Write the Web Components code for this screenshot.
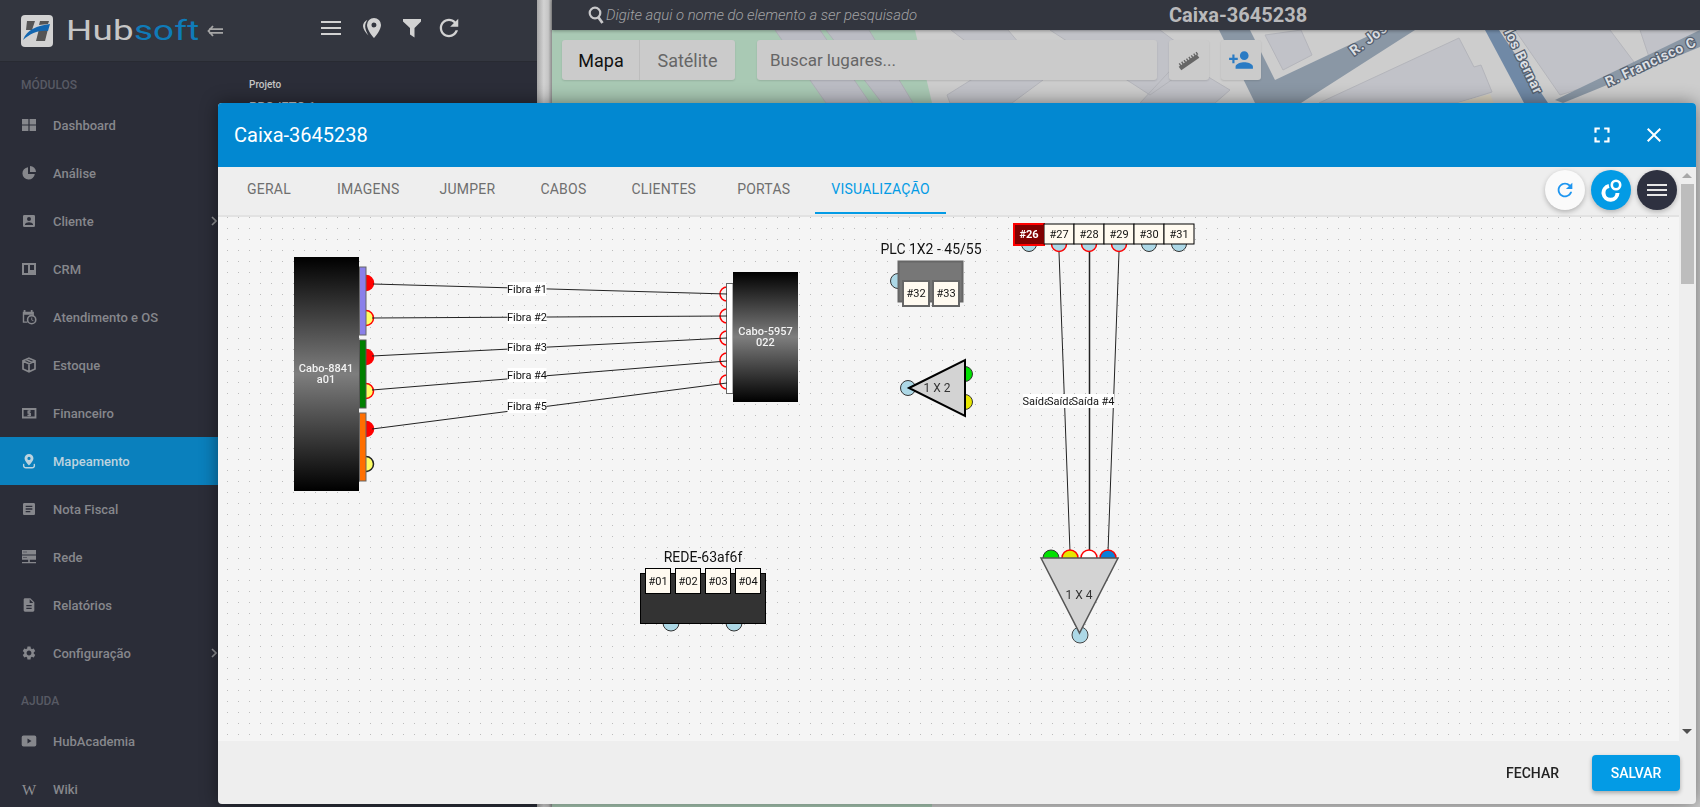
<!DOCTYPE html>
<html lang="pt-BR">
<head>
<meta charset="utf-8">
<title>Hubsoft - Mapeamento</title>
<style>
    html, body { margin: 0; height: 100%; overflow: hidden; background: #2b2d38; font-family: Roboto, "Liberation Sans", sans-serif; }
</style>
</head>
<body>
<hub-app>
    <hub-sidebar>
        <hub-nav-label>MÓDULOS</hub-nav-label>
        <hub-nav-item><svg slot="icon" width="16" height="16" viewBox="0 0 16 16"><path d="M1 2h6.400v5.600H1zM8.600 2H15v5.600H8.600zM1 8.600h6.400V14H1zM8.600 8.600H15V14H8.600z"/></svg>Dashboard</hub-nav-item>
        <hub-nav-item><svg slot="icon" width="16" height="16" viewBox="0 0 16 16"><path d="M7 2.200A6.200 6.200 0 1 0 13.800 9H7zM9 1v6h6a6 6 0 0 0-6-6z"/></svg>Análise</hub-nav-item>
        <hub-nav-item chevron><svg slot="icon" width="18" height="18" viewBox="0 0 24 24"><path d="M3 5v14a2 2 0 0 0 2 2h14a2 2 0 0 0 2-2V5a2 2 0 0 0-2-2H5a2 2 0 0 0-2 2zm12 4a3 3 0 1 1-6 0 3 3 0 0 1 6 0zm-9 8c0-2 4-3.100 6-3.100s6 1.100 6 3.100v1H6v-1z"/></svg>Cliente</hub-nav-item>
        <hub-nav-item><svg slot="icon" width="16" height="16" viewBox="0 0 16 16"><path fill-rule="evenodd" d="M1 2h14v12H1zM3 4v8h4V4zm6 0v5h4V4z"/></svg>CRM</hub-nav-item>
        <hub-nav-item><svg slot="icon" width="18" height="18" viewBox="0 0 18 18"><path d="M3 1h2v2h6V1h2v2h1.500V8h-1.600V6.400H3.600V14h3.600v1.600H2V3h1z"/><circle cx="12" cy="12" r="4.600" fill="none" stroke="currentColor" stroke-width="1.800"/><path d="M11.600 9.600h1V12l1.600 1-.5.8-2.100-1.300z"/></svg>Atendimento e OS</hub-nav-item>
        <hub-nav-item><svg slot="icon" width="16" height="16" viewBox="0 0 16 16"><path fill="none" stroke="currentColor" stroke-width="1.700" d="M8 1.200l6 2.600v8.200l-6 2.800-6-2.800V3.800zM2 4l6 2.800L14 4M8 6.800V14.600M5 2.600l6 2.800"/></svg>Estoque</hub-nav-item>
        <hub-nav-item><svg slot="icon" width="16" height="16" viewBox="0 0 16 16"><path fill-rule="evenodd" d="M1 3h14.400v10.500H1zM2.600 5v6.400h11V5z"/><path fill="none" stroke="currentColor" stroke-width="1.100" d="M10 6H7v2.200h2.400v2.200H6.400M8.200 5v6.400"/></svg>Financeiro</hub-nav-item>
        <hub-nav-item active><svg slot="icon" width="18" height="18" viewBox="0 0 18 18"><path fill-rule="evenodd" d="M9 1a5 5 0 0 1 5 5c0 3.400-5 8-5 8S4 9.400 4 6a5 5 0 0 1 5-5zm0 3.300A1.800 1.800 0 1 0 9 7.900 1.800 1.800 0 0 0 9 4.300z"/><path fill="none" stroke="currentColor" stroke-width="1.600" stroke-linecap="round" d="M3 13c-.5 2.500 1 3.600 2.500 3.600h7c1.500 0 3-1.100 2.500-3.600"/></svg>Mapeamento</hub-nav-item>
        <hub-nav-item><svg slot="icon" width="18" height="18" viewBox="0 0 24 24"><path d="M19 3H5c-1.100 0-2 .9-2 2v14c0 1.100.9 2 2 2h14c1.100 0 2-.9 2-2V5c0-1.100-.9-2-2-2zm-5 14H7v-2h7v2zm3-4H7v-2h10v2zm0-4H7V7h10v2z"/></svg>Nota Fiscal</hub-nav-item>
        <hub-nav-item><svg slot="icon" width="16" height="16" viewBox="0 0 16 16"><path fill-rule="evenodd" d="M1 1h14v4.400H1zM2.500 2.500v1h1v-1zm2 0v1h1v-1zM1 6.400h14v4.400H1zM2.500 8v1h1V8zm2 0v1h1V8zM7.200 10.800h1.600v2.200H15v1.200H1V13h6.200z"/></svg>Rede</hub-nav-item>
        <hub-nav-item><svg slot="icon" width="18" height="18" viewBox="0 0 24 24"><path d="M14 2H6c-1.100 0-1.990.9-1.990 2L4 20c0 1.100.89 2 1.990 2H18c1.100 0 2-.9 2-2V8l-6-6zm2 16H8v-2h8v2zm0-4H8v-2h8v2zm-3-5V3.500L18.500 9H13z"/></svg>Relatórios</hub-nav-item>
        <hub-nav-item chevron><svg slot="icon" width="18" height="18" viewBox="0 0 24 24"><path d="M19.140 12.940c.04-.3.06-.61.06-.94 0-.32-.02-.64-.07-.94l2.030-1.580a.49.49 0 0 0 .12-.61l-1.920-3.320a.488.488 0 0 0-.59-.22l-2.390.96c-.5-.38-1.030-.7-1.620-.94l-.36-2.540a.484.484 0 0 0-.48-.41h-3.840c-.24 0-.43.17-.47.41l-.36 2.540c-.59.24-1.130.57-1.620.94l-2.390-.96c-.22-.08-.47 0-.59.22L2.740 8.870c-.12.21-.08.47.12.61l2.030 1.580c-.05.3-.09.63-.09.94s.02.64.07.94l-2.030 1.580a.49.49 0 0 0-.12.61l1.920 3.320c.12.22.37.29.59.22l2.390-.96c.5.38 1.030.7 1.620.94l.36 2.540c.05.24.24.41.48.41h3.840c.24 0 .44-.17.47-.41l.36-2.540c.59-.24 1.130-.56 1.620-.94l2.390.96c.22.08.47 0 .59-.22l1.920-3.320c.12-.22.07-.47-.12-.61l-2.010-1.580zM12 15.600c-1.980 0-3.600-1.620-3.600-3.600s1.620-3.600 3.600-3.600 3.600 1.620 3.600 3.600-1.620 3.600-3.600 3.600z"/></svg>Configuração</hub-nav-item>
        <hub-nav-label second>AJUDA</hub-nav-label>
        <hub-nav-item><svg slot="icon" width="16" height="16" viewBox="0 0 16 16"><path fill-rule="evenodd" d="M2.500 2.500h11A1.800 1.800 0 0 1 15.300 4.300v7.400a1.800 1.800 0 0 1-1.800 1.800h-11A1.800 1.800 0 0 1 .7 11.700V4.300a1.800 1.800 0 0 1 1.800-1.800zM6.500 5.500v5L10.500 8z"/></svg>HubAcademia</hub-nav-item>
        <hub-nav-item><span slot="icon" style="font: 400 15px 'Liberation Serif', serif; color: #8f9094; display: block; width: 16px; padding-top: 2px; text-align: center;">W</span>Wiki</hub-nav-item>
    </hub-sidebar>
    <hub-panel></hub-panel>
    <hub-gutter></hub-gutter>
    <hub-map></hub-map>
</hub-app>
<hub-modal title-text="Caixa-3645238">
    <hub-tabs></hub-tabs>
    <hub-diagram></hub-diagram>
    <hub-button slot="footer">FECHAR</hub-button>
    <hub-button slot="footer" primary>SALVAR</hub-button>
</hub-modal>

<script>
class HubApp extends HTMLElement {
    connectedCallback() {
        this.attachShadow({ mode: 'open' });
        this.shadowRoot.innerHTML = `
            <style>
                :host { display: flex; width: 100vw; height: 100vh; overflow: hidden; }
            </style>
            <slot></slot>
        `;
    }
}

class HubSidebar extends HTMLElement {
    connectedCallback() {
        this.attachShadow({ mode: 'open' });
        this.shadowRoot.innerHTML = `
            <style>
                :host { display: flex; flex-direction: column; flex: 0 0 238px; background: #2b2d38; color: #8f9094; overflow: hidden; }
                .brand { display: flex; align-items: center; flex: 0 0 62px; box-sizing: border-box; padding-left: 21px; background: #33363f; border-bottom: 1px solid #282a32; }
                .word { flex: 0 0 141px; margin-left: 13px; height: 32px; line-height: 32px; white-space: nowrap; }
                .word span { display: inline-block; transform: scaleX(1.36); transform-origin: left center; font-size: 27px; font-weight: 400; letter-spacing: .2px; color: #c6c6c6; }
                .word b { font-weight: 400; color: #0f7bb8; }
            </style>
            <div class="brand">
                <svg width="32" height="32" viewBox="0 0 32 32">
                    <rect width="32" height="32" rx="4" fill="#d2d2d2"/>
                    <path d="M6 6h8l-3 9H5zM18 14h9l-3 12h-9z" fill="#555"/>
                    <path d="M19 6h9l-1 3-9 1z" fill="#555"/>
                    <path d="M2 25C6 14 16 11 29 9l-2 7C18 15 10 18 2 25z" fill="#1266b0"/>
                </svg>
                <div class="word"><span>Hub<b>soft</b></span></div>
                <svg width="16" height="12" viewBox="0 0 16 12" fill="none" stroke="#a6a6a6" stroke-width="1.800"><path d="M6 1L1.500 6 6 11M2 4.200H16M2 7.800H16"/></svg>
            </div>
            <slot></slot>
        `;
    }
}

class HubNavLabel extends HTMLElement {
    connectedCallback() {
        this.attachShadow({ mode: 'open' });
        this.shadowRoot.innerHTML = `
            <style>
                :host { display: block; flex: 0 0 auto; box-sizing: border-box; height: 39px; padding: 15px 0 0 21px; font-size: 12px; line-height: 16px; font-weight: 500; color: #585a64; }
                :host([second]) { height: 40px; padding-top: 16px; }
            </style>
            <slot></slot>
        `;
    }
}

class HubNavItem extends HTMLElement {
    connectedCallback() {
        this.attachShadow({ mode: 'open' });
        this.shadowRoot.innerHTML = `
            <style>
                :host { display: flex; align-items: center; flex: 0 0 48px; height: 48px; box-sizing: border-box; padding: 0 21px 0 21px; font-size: 13px; font-weight: 500; color: #86878c; fill: currentColor; }
                :host([active]) { background: #0a80bd; color: #bcd3df; }
                .icon { display: flex; align-items: center; justify-content: center; flex: 0 0 16px; width: 16px; margin-right: 16px; }
                .text { flex: 1; white-space: nowrap; }
                .chev { display: none; width: 6px; height: 10px; fill: none; stroke: #8f9094; stroke-width: 1.600; }
                :host([chevron]) .chev { display: block; }
            </style>
            <span class="icon"><slot name="icon"></slot></span>
            <span class="text"><slot></slot></span>
            <svg class="chev" viewBox="0 0 6 10"><path d="M1 1l4 4-4 4"/></svg>
        `;
    }
}

class HubPanel extends HTMLElement {
    connectedCallback() {
        this.attachShadow({ mode: 'open' });
        this.shadowRoot.innerHTML = `
            <style>
                :host { display: flex; flex-direction: column; flex: 0 0 299px; background: #2b2d38; color: #d0d0d0; overflow: hidden; }
                .bar { display: flex; align-items: center; flex: 0 0 62px; box-sizing: border-box; padding: 0 0 6px 83px; gap: 22px; background: #33363f; border-bottom: 1px solid #282a32; }
                .bar svg { display: block; fill: #d2d2d2; }
                .bar svg:last-child { margin-left: -5px; }
                .field { padding: 16px 11px 0; font-size: 10px; font-weight: 500; line-height: 14px; color: #c6c6c6; }
                .value { margin-top: 6px; font-size: 13px; line-height: 18px; font-weight: 400; }
            </style>
            <div class="bar">
                <svg width="20" height="16" viewBox="0 0 20 16"><path d="M0 1h20v2H0zM0 7h20v2H0zM0 13h20v2H0z"/></svg>
                <svg width="18" height="20" viewBox="0 0 18 20"><path fill-rule="evenodd" d="M11 0a7 7 0 0 1 7 7c0 4.500-5.500 11.500-7 13-1.500-1.500-7-8.500-7-13a7 7 0 0 1 7-7zm0 4.500a2.500 2.500 0 1 0 0 5 2.500 2.500 0 0 0 0-5z"/><path d="M4.500 1.800C1.500 3.500 0 5.500 0 8c0 3 2.500 6.500 5.500 9.500C3.500 14 1.800 10.500 2.200 7.500c.3-2.200 1.200-4 2.300-5.700z"/></svg>
                <svg width="18" height="20" viewBox="0 0 18 20"><path d="M0 1h18v2.500L11.500 10v9.500L7 16.500V10L0 3.500z"/></svg>
                <svg width="22" height="22" viewBox="2.500 2.500 19 19"><path d="M17.650 6.350C16.200 4.900 14.210 4 12 4c-4.420 0-7.990 3.580-7.990 8s3.570 8 7.990 8c3.730 0 6.840-2.550 7.730-6h-2.080c-.82 2.330-3.040 4-5.650 4-3.310 0-6-2.690-6-6s2.690-6 6-6c1.660 0 3.140.69 4.220 1.780L13 11h7V4l-2.350 2.350z"/></svg>
            </div>
            <div class="field">Projeto<div class="value">PROJETO 1</div></div>
        `;
    }
}

class HubGutter extends HTMLElement {
    connectedCallback() {
        this.attachShadow({ mode: 'open' });
        this.shadowRoot.innerHTML = `
            <style>
                :host { display: block; flex: 0 0 15px; background: linear-gradient(to right, #a6a6a6, #d2d2d2 45%, #c6c6c6 75%, #8c8c8c); }
            </style>
        `;
    }
}

class HubMap extends HTMLElement {
    connectedCallback() {
        this.attachShadow({ mode: 'open' });
        this.shadowRoot.innerHTML = `
            <style>
                :host { display: flex; flex-direction: column; flex: 1; min-width: 0; }
                .top { display: flex; align-items: center; flex: 0 0 30px; padding-left: 36px; background: #33363f; position: relative; z-index: 2; box-shadow: 0 1px 3px rgba(0,0,0,.3); }
                .search { display: flex; align-items: center; gap: 2px; flex: 0 0 581px; }
                .search span { font-size: 14.85px; font-style: italic; font-weight: 300; color: #a2a2a4; }
                .name { font-size: 20px; font-weight: 700; color: #b9b9bb; }
                .canvas { position: relative; flex: 1; background: #cdcdcd; overflow: hidden; }
                .canvas > svg { position: absolute; left: 0; top: 0; width: 1148px; height: 777px; }
                .label { font: 700 14px Roboto, "Liberation Sans", sans-serif; letter-spacing: .6px; fill: #dcdfe3; stroke: #55606e; stroke-width: 2.500px; paint-order: stroke; }
                .controls { position: relative; display: flex; padding: 10px; }
                .box { display: flex; align-items: center; height: 40px; box-sizing: border-box; background: #cbcbcb; border-radius: 3px; font-size: 17px; color: #666; box-shadow: 0 1px 2px rgba(0,0,0,.12); }
                .types { width: 173px; margin-right: 22px; overflow: hidden; font-size: 18px; }
                .types div { display: flex; align-items: center; justify-content: center; height: 100%; }
                .types .on { flex: 0 0 78px; padding-left: 1px; color: #111; border-right: 1px solid #bdbdbd; box-sizing: border-box; }
                .types .off { flex: 1; }
                .places { width: 400px; padding-left: 13px; margin-right: 12px; }
                .tool { width: 40px; justify-content: center; margin-right: 12px; }
            </style>
            <div class="top">
                <div class="search">
                    <svg width="16" height="18" viewBox="0 0 16 18" fill="none" stroke="#c8c8ca" stroke-width="2.200"><circle cx="7" cy="7" r="5.300"/><path d="M10.500 11.500L14.500 17" stroke-width="2.800"/></svg>
                    <span>Digite aqui o nome do elemento a ser pesquisado</span>
                </div>
                <div class="name">Caixa-3645238</div>
            </div>
            <div class="canvas">
                <svg viewBox="552 30 1148 777">
                    <path d="M552 30H915L932 103V807H552z" fill="#a9c9b4"/>
                    <g fill="#bbbcc4" stroke="#aeafb6">
                        <path d="M775 30H820L870 103H826zM826 30H869L913 103H882z"/>
                    </g>
                    <g fill="#c1c2c8" stroke="#b4b5bb">
                        <path d="M947 95L1003 60 1043 80 1012 103H950zM951 30H1008L1025 50 990 60z"/>
                        <path d="M1140 103L1180 60 1230 90 1215 103zM1050 30H1160L1200 60 1150 95z"/>
                        <path d="M1265 35L1301 30 1312 55 1283 70z"/>
                        <path d="M1319 103L1459 38 1474 67 1481 65 1492 92 1457 103z"/>
                        <path d="M1515 30H1610L1640 70 1560 95z"/>
                        <path d="M1640 30H1700V40L1650 60z"/>
                    </g>
                    <path d="M1457 103L1490 94 1494 103z" fill="#d6cfbd"/>
                    <path d="M1219 30H1250L1275 80 1381 30H1415L1301 103H1255z" fill="#8a97a5"/>
                    <path d="M1555 100L1700 30V47L1563 103z" fill="#8a97a5"/>
                    <path d="M1485 30H1499L1548 103H1524z" fill="#7089a6"/>
                    <text class="label" transform="translate(1354 56) rotate(-37)">R. José</text>
                    <text class="label" transform="translate(1504 32) rotate(64)">los Bernar</text>
                    <text class="label" transform="translate(1608 87) rotate(-25)">R. Francisco C</text>
                </svg>
                <div class="controls">
                    <div class="box types"><div class="on">Mapa</div><div class="off">Satélite</div></div>
                    <div class="box places">Buscar lugares...</div>
                    <div class="box tool">
                        <svg width="24" height="24" viewBox="0 0 24 24" fill="none" stroke="#666"><path stroke-width="4.500" d="M3 20.500L21 8"/><path stroke-width="3" stroke-dasharray="1.400 1.500" d="M2.500 17L20.500 5"/></svg>
                    </div>
                    <div class="box tool">
                        <svg width="26" height="26" viewBox="0 0 24 24" fill="#2a7bc4"><path d="M15 12c2.210 0 4-1.790 4-4s-1.790-4-4-4-4 1.790-4 4 1.790 4 4 4zm-9-2V7H4v3H1v2h3v3h2v-3h3v-2H6zm9 4c-2.670 0-8 1.340-8 4v2h16v-2c0-2.660-5.330-4-8-4z"/></svg>
                    </div>
                </div>
            </div>
        `;
    }
}

class HubModal extends HTMLElement {
    connectedCallback() {
        this.attachShadow({ mode: 'open' });
        this.shadowRoot.innerHTML = `
            <style>
                :host { position: fixed; left: 218px; top: 103px; width: 1478px; height: 701px; display: flex; flex-direction: column; background: #eee; border-radius: 4px; overflow: hidden; box-shadow: 0 0 18px rgba(0,0,0,.45); z-index: 10; }
                header { display: flex; align-items: center; flex: 0 0 64px; padding: 0 30px 0 16px; background: #0288d1; color: #fff; }
                h1 { flex: 1; margin: 0; font-size: 20px; font-weight: 400; }
                header svg { display: block; fill: #fff; }
                header svg + svg { margin-left: 27px; }
                .body { display: flex; flex: 1; min-height: 0; }
                .main { display: flex; flex-direction: column; flex: 1; min-width: 0; }
                .bar { position: relative; flex: 0 0 17px; }
                .up, .down { position: absolute; left: 3px; width: 0; height: 0; border-left: 5px solid transparent; border-right: 5px solid transparent; }
                .up { top: 6px; border-bottom: 5px solid #a8a8a8; }
                .down { bottom: 7px; border-top: 5px solid #505050; }
                .thumb { position: absolute; left: 2px; right: 2px; top: 17px; height: 100px; background: #bdbdbd; }
                footer { display: flex; align-items: center; justify-content: flex-end; flex: 0 0 63px; padding: 0 16px 0 0; box-sizing: border-box; gap: 33px; }
            </style>
            <header>
                <h1></h1>
                <svg width="26" height="26" viewBox="0 0 24 24"><path d="M7 14H5v5h5v-2H7v-3zm-2-4h2V7h3V5H5v5zm12 7h-3v2h5v-5h-2v3zM14 5v2h3v3h2V5h-5z"/></svg>
                <svg width="24" height="24" viewBox="0 0 24 24"><path d="M19 6.410L17.590 5 12 10.590 6.410 5 5 6.410 10.590 12 5 17.590 6.410 19 12 13.410 17.590 19 19 17.590 13.410 12z"/></svg>
            </header>
            <div class="body">
                <div class="main"><slot></slot></div>
                <div class="bar"><span class="up"></span><span class="thumb"></span><span class="down"></span></div>
            </div>
            <footer><slot name="footer"></slot></footer>
        `;
        this.shadowRoot.querySelector('h1').textContent = this.getAttribute('title-text');
    }
}

class HubTabs extends HTMLElement {
    connectedCallback() {
        const tabs = [['GERAL', 0], ['IMAGENS', 14], ['JUMPER', 8], ['CABOS', 13], ['CLIENTES', 13], ['PORTAS', 9], ['VISUALIZAÇÃO', 9]];
        this.attachShadow({ mode: 'open' });
        this.shadowRoot.innerHTML = `
            <style>
                :host { display: flex; flex: 0 0 50px; box-sizing: border-box; height: 50px; padding-left: 13px; background: #eee; border-bottom: 2px solid #e2e2e2; }
                a { display: flex; align-items: center; padding: 0 16px 0; height: 45px; font-size: 14px; letter-spacing: .23px; color: #6f6f6f; text-decoration: none; border-bottom: 2px solid transparent; box-sizing: content-box; }
                a { height: 44px; padding-bottom: 1px; }
                a.on { color: #039be5; border-bottom-color: #039be5; }
                .fabs { display: flex; gap: 6px; margin-left: auto; padding: 3px 2.500px 0 0; }
                .fab { display: flex; align-items: center; justify-content: center; width: 40px; height: 40px; border-radius: 50%; background: #fafafa; box-shadow: 0 2px 5px rgba(0,0,0,.25); }
                .fab.blue { background: #039be5; }
                .fab.dark { background: #2e3140; }
            </style>
            ${tabs.map(([name, gap], i) => `<a href="#" class="${i === 6 ? 'on' : ''}" style="margin-left:${gap}px">${name}</a>`).join('')}
            <div class="fabs">
                <div class="fab"><svg width="22" height="22" viewBox="0 0 24 24" fill="#1e96f0"><path d="M17.650 6.350C16.200 4.900 14.210 4 12 4c-4.420 0-7.990 3.580-7.990 8s3.570 8 7.990 8c3.730 0 6.840-2.550 7.730-6h-2.080c-.82 2.330-3.040 4-5.650 4-3.310 0-6-2.690-6-6s2.690-6 6-6c1.660 0 3.140.69 4.220 1.780L13 11h7V4l-2.350 2.350z"/></svg></div>
                <div class="fab blue"><svg width="24" height="24" viewBox="0 0 24 24" fill="none" stroke="#fff"><path stroke-width="4" d="M10 8A7 7 0 1 0 18.500 15"/><circle cx="17" cy="7" r="4.200" stroke-width="2.600"/></svg></div>
                <div class="fab dark"><svg width="20" height="14" viewBox="0 0 20 14" fill="none" stroke="#e6e6e6" stroke-width="2"><path d="M0 2h20M0 7h20M0 12h20"/></svg></div>
            </div>
        `;
    }
}

class HubDiagram extends HTMLElement {
    connectedCallback() {
        // coordinates below are page coordinates, the viewBox starts at the canvas corner
        const txt = (x, y, s, cls = 't') => `<text class="${cls}" x="${x}" y="${y}">${s}</text>`;
        const dot = (x, y, fill, stroke = '#333', r = 7.500, w = 1) => `<circle cx="${x}" cy="${y}" r="${r}" fill="${fill}" stroke="${stroke}" stroke-width="${w}"/>`;
        const port = (x, y, w, h, s, stroke = '#000', sw = 1, fill = '#fffaf0', cls = 't') =>
            `<rect x="${x}" y="${y}" width="${w}" height="${h}" fill="${fill}" stroke="${stroke}" stroke-width="${sw}"/>` + txt(x + w / 2, y + h / 2, s, cls);
        const line = (x1, y1, x2, y2, w = 1) => `<line x1="${x1}" y1="${y1}" x2="${x2}" y2="${y2}" stroke="#222" stroke-width="${w}"/>`;
        const tag = (cx, y, w, s) => `<rect x="${cx - w / 2}" y="${y - 7}" width="${w}" height="14" fill="#fff"/>` + txt(cx, y, s);
        const red = '#f00', yel = '#ffff66', blue = '#add8e6';

        const leftDots = [[283, red, red], [318, yel, red], [357, red, red], [391, yel, red], [429, red, red], [464, yel, '#222']];
        const rightDots = [294, 316, 338, 360, 382];
        const fibres = [[373, 284, 727, 294, 527, 289], [372, 318, 727, 316, 527, 317], [372, 356, 727, 338, 527, 347], [372, 390, 727, 361, 527, 375], [372, 429, 727, 383, 527, 406]];

        this.attachShadow({ mode: 'open' });
        this.shadowRoot.innerHTML = `
            <style>
                :host { display: block; flex: 1; min-height: 0; background: #f5f5f5; overflow: hidden; }
                svg { display: block; width: 1461px; height: 523px; }
                text { font: 400 11px Roboto, "Liberation Sans", sans-serif; fill: #111; text-anchor: middle; dominant-baseline: central; }
                .cable { font-weight: 500; fill: #f2f2f2; }
                .sel { font-weight: 700; fill: #fff; }
                .title { font-size: 14px; }
                .split { font-size: 12px; fill: #333; }
            </style>
            <svg viewBox="218 217 1461 523">
                <defs>
                    <pattern id="dots" x="0" y="0" width="11" height="11" patternUnits="userSpaceOnUse" patternTransform="translate(218 217)">
                        <rect x="9" y="0" width="1" height="1" fill="#bcbcbc"/>
                    </pattern>
                    <linearGradient id="metal" x1="0" y1="0" x2="0" y2="1">
                        <stop offset="0" stop-color="#000"/>
                        <stop offset=".5" stop-color="#7e7e7e"/>
                        <stop offset="1" stop-color="#000"/>
                    </linearGradient>
                </defs>
                <rect x="218" y="217" width="1461" height="523" fill="url(#dots)"/>

                ${leftDots.map(([y, f, s]) => dot(366, y, f, s, 7.500, 1.500)).join('')}
                <rect x="359.500" y="267" width="6.500" height="68" fill="#8a80ea" stroke="#666"/>
                <rect x="359.500" y="340" width="6.500" height="68" fill="#008000" stroke="#555"/>
                <rect x="359.500" y="413" width="6.500" height="68" fill="#ff6f00" stroke="#666"/>
                <rect x="294" y="257" width="65" height="234" fill="url(#metal)"/>
                ${txt(326, 368, 'Cabo-8841', 't cable')}${txt(326, 379, 'a01', 't cable')}

                ${rightDots.map(y => dot(727, y, '#f5f5f5', red, 7, 1.500)).join('')}
                <rect x="726.500" y="283.500" width="6.500" height="110" fill="#fff" stroke="#666"/>
                <rect x="733" y="272" width="65" height="130" fill="url(#metal)"/>
                ${txt(765.5, 331, 'Cabo-5957', 't cable')}${txt(765.5, 342, '022', 't cable')}

                ${fibres.map(([a, b, c, d]) => line(a, b, c, d)).join('')}
                ${fibres.map(([, , , , x, y], i) => tag(x, y, 39, 'Fibra #' + (i + 1))).join('')}

                ${txt(931, 249, 'PLC 1X2 - 45/55', 't title')}
                ${dot(898, 281, blue)}
                <rect x="898.500" y="261.500" width="64" height="40" fill="#777" stroke="#666" stroke-width="2"/>
                ${port(903, 281, 26, 25, '#32', '#666', 2)}${port(933, 281, 26, 25, '#33', '#666', 2)}

                ${dot(908, 388, blue)}${dot(965, 374, '#00e000')}${dot(965, 402, '#e6e600')}
                <path d="M909 388L965 360V416z" fill="#d3d3d3" stroke="#000" stroke-width="2"/>
                ${txt(937, 388, '1 X 2', 't split')}

                ${[1029, 1149, 1179].map(x => dot(x, 244, blue)).join('')}
                ${[1059, 1089, 1119].map(x => dot(x, 244, blue, red, 7.500, 1.500)).join('')}
                ${port(1014, 224, 30, 21, '#26', red, 2, '#800000', 't sel')}
                ${[27, 28, 29, 30, 31].map((n, i) => port(1044 + i * 30, 224, 30, 20, '#' + n)).join('')}

                ${line(1059, 252, 1070, 552)}${line(1089.5, 252, 1089.5, 550, 1.500)}${line(1119, 252, 1108, 552)}
                ${tag(1044, 401, 42, 'Saída #2')}${tag(1068.5, 401, 42, 'Saída #3')}${tag(1093, 401, 42, 'Saída #4')}

                ${dot(1051, 558, '#00e000', '#333', 8)}${dot(1070, 558, '#e6e600', red, 8, 1.500)}${dot(1089, 558, '#fff', red, 8, 1.500)}${dot(1108, 558, '#0a7fd8', red, 8, 1.500)}
                ${dot(1080, 635, blue, '#444', 8)}
                <path d="M1041 558H1118L1079.500 633z" fill="#d3d3d3" stroke="#555" stroke-width="1.500"/>
                ${txt(1079, 595, '1 X 4', 't split')}

                ${txt(703, 557, 'REDE-63af6f', 't title')}
                ${dot(671, 623, blue, '#333', 8)}${dot(734, 623, blue, '#333', 8)}
                <rect x="640.500" y="573.500" width="125" height="50" fill="#333" stroke="#000"/>
                ${port(645.5, 568.5, 25, 25, '#01')}${port(675.5, 568.5, 25, 25, '#02')}${port(705.5, 568.5, 25, 25, '#03')}${port(735.5, 568.5, 25, 25, '#04')}
            </svg>
        `;
    }
}

class HubButton extends HTMLElement {
    connectedCallback() {
        this.attachShadow({ mode: 'open' });
        this.shadowRoot.innerHTML = `
            <style>
                :host { display: inline-flex; align-items: center; justify-content: center; height: 36px; font-size: 14px; font-weight: 500; color: #222; border-radius: 4px; }
                :host([primary]) { width: 88px; background: #039be5; color: #fff; box-shadow: 0 2px 4px rgba(0,0,0,.3); }
            </style>
            <slot></slot>
        `;
    }
}

customElements.define('hub-app', HubApp);
customElements.define('hub-sidebar', HubSidebar);
customElements.define('hub-nav-label', HubNavLabel);
customElements.define('hub-nav-item', HubNavItem);
customElements.define('hub-panel', HubPanel);
customElements.define('hub-gutter', HubGutter);
customElements.define('hub-map', HubMap);
customElements.define('hub-modal', HubModal);
customElements.define('hub-tabs', HubTabs);
customElements.define('hub-diagram', HubDiagram);
customElements.define('hub-button', HubButton);
</script>
</body>
</html>
